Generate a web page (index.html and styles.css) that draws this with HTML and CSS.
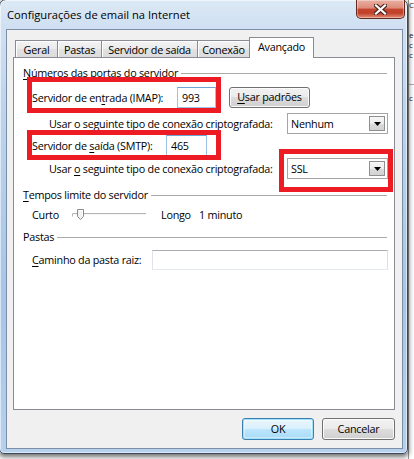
FILE: index.html
```html
<!DOCTYPE html>
<html lang="pt">
<head>
<meta charset="utf-8">
<title>Configurações de email na Internet</title>
<link rel="stylesheet" href="styles.css">
</head>
<body>
<div class="screen">
  <div class="window">
    <div class="titlebar">
      <span class="title">Configurações de email na Internet</span>
      <div class="close">
        <svg width="13" height="11" viewBox="0 0 13 11">
          <path d="M2 1.5L11 9.5M11 1.5L2 9.5" stroke="#4b2520" stroke-width="4.4" stroke-linecap="square"/>
          <path d="M2 1.5L11 9.5M11 1.5L2 9.5" stroke="#ffffff" stroke-width="2.2" stroke-linecap="square"/>
        </svg>
      </div>
    </div>
    <div class="client">
      <div class="tabs">
        <div class="tab tab-geral">Geral</div>
        <div class="tab tab-pastas">Pastas</div>
        <div class="tab tab-saida">Servidor de saída</div>
        <div class="tab tab-conexao">Conexão</div>
        <div class="tab tab-avancado active">Avançado</div>
      </div>
      <div class="panel">
        <div class="group g-ports"><span><u class="ak">N</u>úmeros das portas do servidor</span><i class="rule"></i></div>

        <div class="row r-imap">
          <span class="lbl lbl-imap">Servidor de en<u class="ak">t</u>rada (IMAP):</span>
          <div class="field f-imap">993</div>
          <div class="btn btn-defaults"><u class="ak">U</u>sar padrões</div>
        </div>

        <div class="row r-crypt1">
          <span class="sublbl">Usar o seguinte tipo de cone<u class="ak">x</u>ão criptografada:</span>
          <div class="combo">Nenhum<span class="drop"><svg width="7" height="4" viewBox="0 0 7 4"><path d="M0 0h7L3.5 4z" fill="#000"/></svg></span></div>
        </div>

        <div class="row r-smtp">
          <span class="lbl lbl-smtp">Servidor de <u class="ak">s</u>aída (SMTP):</span>
          <div class="field f-smtp">465</div>
        </div>

        <div class="row r-crypt2">
          <span class="sublbl">Usar <u class="ak">o</u> seguinte tipo de conexão criptografada:</span>
          <div class="combo">SSL<span class="drop"><svg width="7" height="4" viewBox="0 0 7 4"><path d="M0 0h7L3.5 4z" fill="#000"/></svg></span></div>
        </div>

        <div class="group g-time"><span><u class="ak">T</u>empos limite do servidor</span><i class="rule"></i></div>

        <div class="row r-slider">
          <span class="lbl lbl-curto">Curto</span>
          <svg class="slider" width="75" height="16" viewBox="0 0 75 16">
            <path d="M0.5 6.5H74" stroke="#b4b4b4" fill="none"/>
            <path d="M0.5 7V9.5" stroke="#b4b4b4" fill="none"/>
            <path d="M1 7.5H74" stroke="#f4f4f4" fill="none"/>
            <path d="M5.5 2.5H11.5V9.5L8.5 12.5L5.5 9.5Z" fill="#f2f2f2" stroke="#8a8a8a"/>
            <path d="M6.5 3.5H10.5V9" stroke="#ffffff" fill="none"/>
          </svg>
          <span class="lbl lbl-longo">Longo</span>
          <span class="lbl">1 minuto</span>
        </div>

        <div class="group g-folders"><span>Pastas</span><i class="rule"></i></div>

        <div class="row r-path">
          <span class="lbl lbl-path"><u class="ak">C</u>aminho da pasta raiz:</span>
          <div class="field f-path"></div>
        </div>
      </div>
      <div class="buttons">
        <div class="btn btn-ok">OK</div>
        <div class="btn btn-cancel">Cancelar</div>
      </div>
    </div>
  </div>
  <div class="behind">
    <span class="b-c1">C</span>
    <span class="b-e">e</span>
    <span class="b-c">c</span>
    <span class="b-c">c</span>
    <i class="b-line"></i>
    <span class="b-c">c</span>
  </div>

  <div class="mark mark-1"></div>
  <div class="mark mark-2"></div>
  <div class="mark mark-3"></div>
</div>
</body>
</html>
```
FILE: styles.css
```css
* { box-sizing: border-box; }
html, body { margin: 0; padding: 0; }
body {
  width: 414px;
  height: 459px;
  overflow: hidden;
  background: #ffffff;
  font-family: "Open Sans", "Noto Sans", sans-serif;
  font-size: 10.8px;
  letter-spacing: -0.25px;
  line-height: 16px;
  color: #000;
}
.screen {
  position: relative;
  width: 414px;
  height: 459px;
  display: flex;
  align-items: flex-start;
  overflow: hidden;
  background: #ffffff;
}

/* ---------- window frame ---------- */
.window {
  flex: none;
  position: relative;
  z-index: 1;
  width: 409px;
  height: 455px;
  margin: -1px 0 0 -1px;
  border: 1px solid #3a4859;
  border-radius: 7px 7px 5px 5px;
  background: linear-gradient(180deg, #dde9f5 0px, #d0e0f2 26px, #bdd4ed 110px, #a6c5e7 300px, #b6d1ee 455px);
  box-shadow: inset 0 0 0 1px rgba(255,255,255,0.55), 0 2px 5px 1px rgba(0,0,0,0.55);
  display: flex;
  flex-direction: column;
}
.titlebar {
  height: 29px;
  flex: none;
  display: flex;
  justify-content: space-between;
  align-items: flex-start;
  padding: 0 2px 0 7px;
}
.title {
  margin-top: 7px;
  line-height: 16px;
  font-size: 11.2px;
  letter-spacing: 0;
  color: #000;
}
.close {
  width: 49px;
  height: 19px;
  border: 1px solid #5e2a22;
  border-top: none;
  border-radius: 0 0 5px 5px;
  background: linear-gradient(180deg, #eab0a2 0%, #dc8c78 44%, #c4462e 52%, #c13f28 72%, #e48d75 100%);
  box-shadow: inset 0 0 0 1px rgba(255,255,255,0.35);
  display: flex;
  align-items: center;
  justify-content: center;
}
.close svg { display: block; }

.client {
  flex: 1;
  margin: 0 4px 4px 6px;
  border: 1px solid #7c8fa6;
  background: #f0f0f0;
  padding: 7px 7px 0 6px;
  display: flex;
  flex-direction: column;
}

/* ---------- tabs ---------- */
.tabs {
  display: flex;
  align-items: flex-end;
  padding-left: 2px;
  height: 20px;
  flex: none;
}
.tab {
  flex: none;
  height: 17px;
  border: 1px solid #898c95;
  border-bottom: none;
  border-right: none;
  background: linear-gradient(180deg, #f3f3f3 0%, #ebebeb 50%, #e1e1e1 51%, #dcdcdc 100%);
  box-shadow: inset 1px 1px 0 #ffffff;
  text-align: center;
  line-height: 15px;
  padding-top: 1px;
  white-space: nowrap;
}
.tab-geral { width: 42px; }
.tab-pastas { width: 44px; }
.tab-saida { width: 96px; }
.tab-conexao { width: 53px; border-right: 1px solid #898c95; }
.tab.active {
  position: relative;
  z-index: 2;
  height: 21px;
  width: 65px;
  margin-left: -1px;
  margin-bottom: -1px;
  background: #ffffff;
  box-shadow: none;
  border-right: 1px solid #898c95;
  line-height: 16px;
  padding-top: 1px;
}

/* ---------- panel ---------- */
.panel {
  flex: none;
  height: 353px;
  border: 1px solid #898c95;
  background: #ffffff;
  padding: 7px 6px 0 9px;
  display: flex;
  flex-direction: column;
}
.group {
  height: 16px;
  display: flex;
  align-items: center;
  white-space: nowrap;
}
.rule {
  flex: 1;
  height: 1px;
  margin-left: 3px;
  margin-right: 1px;
  background: #a9a9a9;
}
.g-time { margin-top: 8px; }
.g-folders { margin-top: 6px; }

.row {
  display: flex;
  align-items: center;
  white-space: nowrap;
}
.lbl { flex: none; }
.r-imap { height: 21px; margin-top: 6px; padding-left: 9px; }
.r-crypt1 { height: 21px; margin-top: 5px; padding-left: 26px; justify-content: space-between; }
.r-smtp { height: 21px; margin-top: 1px; padding-left: 9px; }
.r-crypt2 { height: 21px; margin-top: 2px; padding-left: 26px; justify-content: space-between; }
.r-slider { height: 16px; margin-top: 4px; padding-left: 9px; }
.r-path { height: 20px; margin-top: 5px; padding-left: 9px; }

.lbl-imap { width: 145px; }
.lbl-smtp { width: 134px; }
.lbl-curto { width: 40px; }
.lbl-longo { width: 38px; margin-left: 14px; }
.lbl-path { width: 120px; }
.slider { display: block; flex: none; }

.ak {
  text-decoration: underline;
  text-decoration-thickness: 1px;
  text-underline-offset: 2px;
}

/* ---------- inputs ---------- */
.field {
  flex: none;
  height: 21px;
  border: 1px solid #abadb3;
  border-left-color: #e2e3ea;
  border-right-color: #dbdfe6;
  border-bottom-color: #e3e9ef;
  background: #ffffff;
  padding: 0 4px;
  line-height: 19px;
}
.f-imap {
  width: 39px;
  border-color: #9cc3e6;
  border-top-color: #6ea3d2;
}
.f-smtp {
  width: 41px;
  border-color: #9cc3e6;
  border-top-color: #6ea3d2;
}
.f-path { flex: 1; height: 20px; }

.combo {
  flex: none;
  position: relative;
  width: 101px;
  height: 21px;
  border: 1px solid #a5a5a5;
  background: #ffffff;
  padding: 0 3px;
  line-height: 19px;
}
.drop {
  position: absolute;
  right: 2px;
  top: 2px;
  width: 16px;
  height: 15px;
  border: 1px solid #8e8f8f;
  background: linear-gradient(180deg, #f7f7f7 0%, #ececec 50%, #dcdcdc 51%, #d2d2d2 100%);
  display: flex;
  align-items: center;
  justify-content: center;
}
.drop svg { display: block; }

/* ---------- buttons ---------- */
.btn {
  flex: none;
  height: 22px;
  border: 1px solid #707070;
  border-radius: 3px;
  background: linear-gradient(180deg, #f2f2f2 0%, #ebebeb 49%, #dddddd 50%, #cfcfcf 100%);
  box-shadow: inset 0 0 0 1px #fbfbfb;
  text-align: center;
  line-height: 19px;
}
.btn-defaults { width: 81px; height: 21px; margin-left: 13px; margin-top: -1px; line-height: 18px; }
.buttons {
  display: flex;
  justify-content: flex-end;
  gap: 8px;
  margin-top: 8px;
}
.btn-ok {
  width: 72px;
  border-color: #3c7fb1;
  background: linear-gradient(180deg, #eaf6fd 0%, #d9f0fc 49%, #bee6fd 50%, #a7d9f5 100%);
  box-shadow: inset 0 0 0 1px #9fe1fb, inset 0 0 0 2px rgba(255,255,255,0.4);
}
.btn-cancel { width: 73px; }

/* ---------- window behind ---------- */
.behind {
  flex: 1;
  height: 459px;
  display: flex;
  flex-direction: column;
  font-size: 8px;
  letter-spacing: 0;
  line-height: 8px;
  color: #1a1a1a;
  border-left: 1px solid #9a9a9a;
}
.behind span { display: block; height: 8px; }
.b-c1 { margin-top: 1px; }
.b-e { margin-top: 22px; }
.b-c { margin-top: 2px; }
.b-line { display: block; height: 1px; background: #b0b0b0; margin-top: 25px; margin-bottom: 7px; }

/* ---------- red annotation boxes ---------- */
.mark {
  position: absolute;
  z-index: 5;
  border: 5px solid #ed1c24;
}
.mark-1 { left: 27px; top: 77px; width: 194px; height: 36px; }
.mark-2 { left: 27px; top: 130px; width: 194px; height: 30px; }
.mark-3 { left: 279px; top: 149px; width: 114px; height: 43px; }
```
